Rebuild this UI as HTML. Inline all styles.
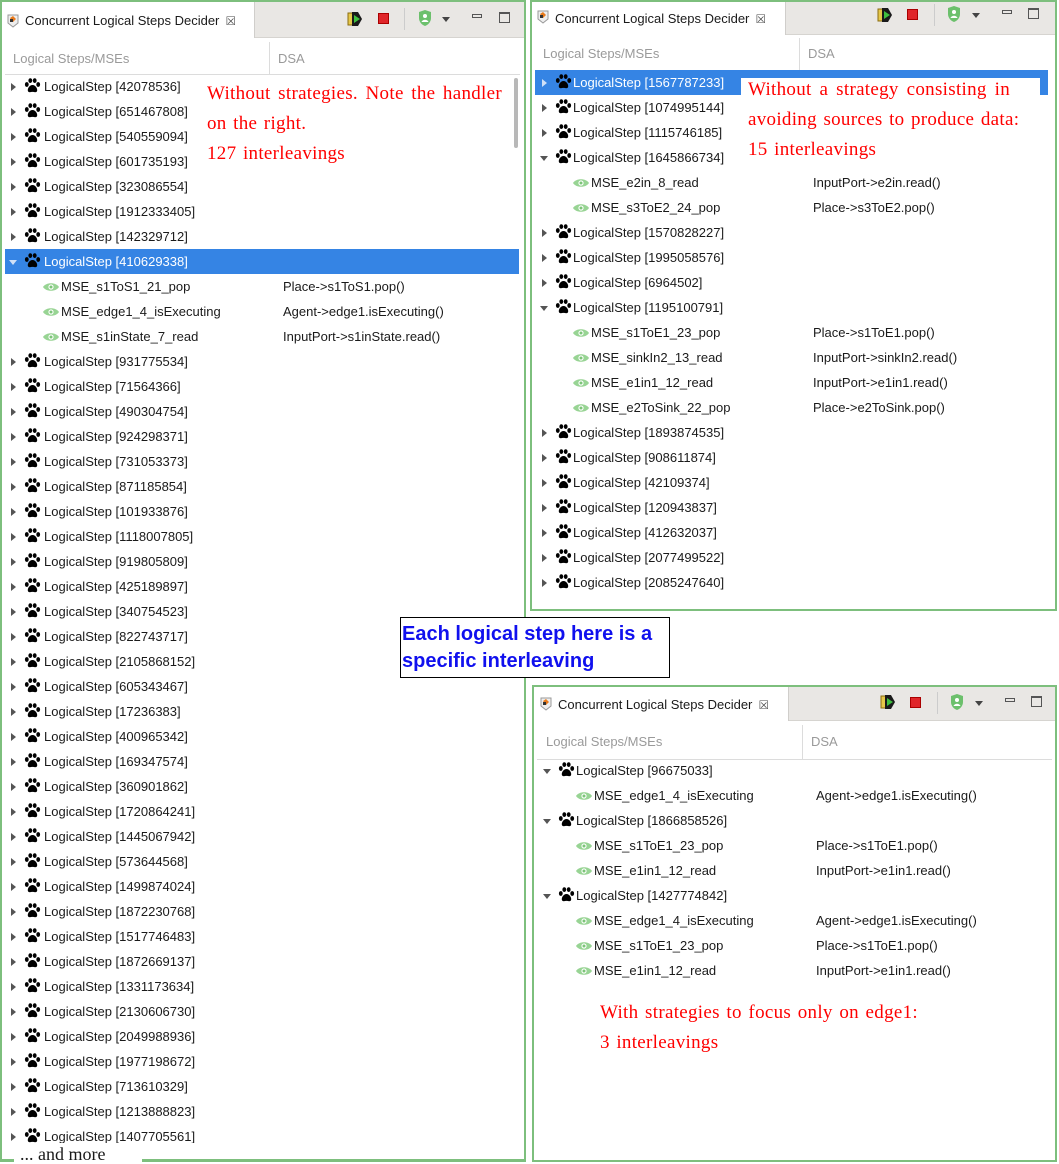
<!DOCTYPE html>
<html><head><meta charset="utf-8"><style>
*{margin:0;padding:0;box-sizing:border-box}
body{width:1059px;height:1162px;background:#fff;position:relative;overflow:hidden;font-family:"Liberation Sans",sans-serif;font-size:13px;color:#1a1a1a}
.panel{position:absolute;border:2px solid #7dbf7d;background:#fff}
.tabbar{position:absolute;left:0;right:0;top:0;background:#e9e7e4;border-bottom:1px solid #d6d4d0}
.tab{position:absolute;left:0;top:0;background:#fff;border-right:1px solid #d0cecb;font-size:13px;white-space:nowrap}
.hdr{position:absolute;color:#9a9a9a;font-size:13px;white-space:nowrap}
.vdiv{position:absolute;width:1px;background:#dcdcdc}
.hline{position:absolute;height:1px;background:#dcdcdc}
.rows{position:absolute;left:0;width:1059px}
.r{height:25px;position:relative;white-space:nowrap;line-height:25px}
.r .a{position:absolute;left:var(--a);top:8.5px;width:0;height:0;border-left:5px solid #555;border-top:4px solid transparent;border-bottom:4px solid transparent}
.r .dn{position:absolute;left:calc(var(--a) - 2px);top:10.5px;width:0;height:0;border-top:5px solid #555;border-left:4.5px solid transparent;border-right:4.5px solid transparent}
.r svg.p{position:absolute;left:var(--p);top:4px}
.r .t{position:absolute;left:var(--t)}
.r svg.e{position:absolute;left:var(--e);top:8px}
.r .c{position:absolute;left:var(--c)}
.r .d{position:absolute;left:var(--d)}
.sel{background:#3584e4;color:#fff}
.sel .dn{border-top-color:#cfe0f7}
.sel .a{border-left-color:#cfe0f7}
.note{position:absolute;color:#f00;font-family:"Liberation Serif",serif;font-size:19px;letter-spacing:.3px;word-spacing:1.5px;line-height:30px;white-space:nowrap}
.note .j{text-align:justify;text-align-last:justify}
</style></head><body>

<!-- LEFT PANEL -->
<div class="panel" style="left:0;top:0;width:526px;height:1162px;border-bottom:none">
 <div class="tabbar" style="height:36px"></div>
 <div class="tab" style="width:253px;height:36px;line-height:38px;padding-left:23px">Concurrent Logical Steps Decider <span style="font-size:12px;color:#444;margin-left:3px">⮽</span></div>
 <svg style="position:absolute;left:5px;top:12px" width="12" height="14" viewBox="0 0 12 14"><path d="M1 1h10v8l-5 4-5-4z" fill="#eee" stroke="#999"/><path d="M3 4l3-2 3 3-3 3z" fill="#e87a1c"/><rect x="3" y="5" width="3" height="3" fill="#333"/></svg>
 <div class="hdr" style="left:11px;top:49px">Logical Steps/MSEs</div>
 <div class="vdiv" style="left:267px;top:40px;height:32px"></div>
 <div class="hdr" style="left:276px;top:49px">DSA</div>
 <div class="hline" style="left:3px;width:515px;top:72px"></div>
 <div style="position:absolute;left:512px;top:76px;width:4px;height:70px;background:#b8b8b8;border-radius:2px"></div>
</div>
<svg style="position:absolute;left:346px;top:10px" width="18" height="18" viewBox="0 0 18 18"><rect x="2" y="3" width="5" height="12" fill="#e6c84a" stroke="#8a6d10"/><path d="M6 2h6l4 7-4 7H6z" fill="#1a1a1a"/><path d="M8 5l6 4-6 4z" fill="#3fbf3f"/></svg>
<div style="position:absolute;left:378px;top:13px;width:11px;height:11px;background:#e0262a;border:1px solid #a00"></div>
<div style="position:absolute;left:404px;top:8px;width:1px;height:22px;background:#ccc"></div>
<svg style="position:absolute;left:417px;top:9px" width="16" height="18" viewBox="0 0 16 18"><path d="M8 1l6 2v6c0 4-3 7-6 8-3-1-6-4-6-8V3z" fill="#6cc06c"/><circle cx="8" cy="7" r="2" fill="#fff"/><path d="M4.5 13c1-3 6-3 7 0z" fill="#fff"/></svg>
<div style="position:absolute;left:442px;top:17px;border-top:5px solid #444;border-left:4.5px solid transparent;border-right:4.5px solid transparent"></div>
<div style="position:absolute;left:472px;top:14px;width:10px;height:4px;border:1px solid #555"></div>
<div style="position:absolute;left:499px;top:12px;width:11px;height:11px;border:1px solid #555;border-top-width:2px"></div>

<div class="rows" style="top:74px;--a:11px;--p:24px;--t:44px;--e:43px;--c:61px;--d:283px">
<div class="r"><i class="a"></i><svg class="p" width="17" height="16" viewBox="0 0 17 16"><ellipse cx="2.8" cy="6.5" rx="1.9" ry="2.4"/><ellipse cx="6.3" cy="2.6" rx="1.9" ry="2.4"/><ellipse cx="10.7" cy="2.6" rx="1.9" ry="2.4"/><ellipse cx="14.2" cy="6.5" rx="1.9" ry="2.4"/><path d="M8.5 7c-3 0-5.5 4-4.5 6.3 1 1.6 3 .6 4.5.6s3.5 1 4.5-.6C14 11 11.5 7 8.5 7z"/></svg><span class="t">LogicalStep [42078536]</span></div>
<div class="r"><i class="a"></i><svg class="p" width="17" height="16" viewBox="0 0 17 16"><ellipse cx="2.8" cy="6.5" rx="1.9" ry="2.4"/><ellipse cx="6.3" cy="2.6" rx="1.9" ry="2.4"/><ellipse cx="10.7" cy="2.6" rx="1.9" ry="2.4"/><ellipse cx="14.2" cy="6.5" rx="1.9" ry="2.4"/><path d="M8.5 7c-3 0-5.5 4-4.5 6.3 1 1.6 3 .6 4.5.6s3.5 1 4.5-.6C14 11 11.5 7 8.5 7z"/></svg><span class="t">LogicalStep [651467808]</span></div>
<div class="r"><i class="a"></i><svg class="p" width="17" height="16" viewBox="0 0 17 16"><ellipse cx="2.8" cy="6.5" rx="1.9" ry="2.4"/><ellipse cx="6.3" cy="2.6" rx="1.9" ry="2.4"/><ellipse cx="10.7" cy="2.6" rx="1.9" ry="2.4"/><ellipse cx="14.2" cy="6.5" rx="1.9" ry="2.4"/><path d="M8.5 7c-3 0-5.5 4-4.5 6.3 1 1.6 3 .6 4.5.6s3.5 1 4.5-.6C14 11 11.5 7 8.5 7z"/></svg><span class="t">LogicalStep [540559094]</span></div>
<div class="r"><i class="a"></i><svg class="p" width="17" height="16" viewBox="0 0 17 16"><ellipse cx="2.8" cy="6.5" rx="1.9" ry="2.4"/><ellipse cx="6.3" cy="2.6" rx="1.9" ry="2.4"/><ellipse cx="10.7" cy="2.6" rx="1.9" ry="2.4"/><ellipse cx="14.2" cy="6.5" rx="1.9" ry="2.4"/><path d="M8.5 7c-3 0-5.5 4-4.5 6.3 1 1.6 3 .6 4.5.6s3.5 1 4.5-.6C14 11 11.5 7 8.5 7z"/></svg><span class="t">LogicalStep [601735193]</span></div>
<div class="r"><i class="a"></i><svg class="p" width="17" height="16" viewBox="0 0 17 16"><ellipse cx="2.8" cy="6.5" rx="1.9" ry="2.4"/><ellipse cx="6.3" cy="2.6" rx="1.9" ry="2.4"/><ellipse cx="10.7" cy="2.6" rx="1.9" ry="2.4"/><ellipse cx="14.2" cy="6.5" rx="1.9" ry="2.4"/><path d="M8.5 7c-3 0-5.5 4-4.5 6.3 1 1.6 3 .6 4.5.6s3.5 1 4.5-.6C14 11 11.5 7 8.5 7z"/></svg><span class="t">LogicalStep [323086554]</span></div>
<div class="r"><i class="a"></i><svg class="p" width="17" height="16" viewBox="0 0 17 16"><ellipse cx="2.8" cy="6.5" rx="1.9" ry="2.4"/><ellipse cx="6.3" cy="2.6" rx="1.9" ry="2.4"/><ellipse cx="10.7" cy="2.6" rx="1.9" ry="2.4"/><ellipse cx="14.2" cy="6.5" rx="1.9" ry="2.4"/><path d="M8.5 7c-3 0-5.5 4-4.5 6.3 1 1.6 3 .6 4.5.6s3.5 1 4.5-.6C14 11 11.5 7 8.5 7z"/></svg><span class="t">LogicalStep [1912333405]</span></div>
<div class="r"><i class="a"></i><svg class="p" width="17" height="16" viewBox="0 0 17 16"><ellipse cx="2.8" cy="6.5" rx="1.9" ry="2.4"/><ellipse cx="6.3" cy="2.6" rx="1.9" ry="2.4"/><ellipse cx="10.7" cy="2.6" rx="1.9" ry="2.4"/><ellipse cx="14.2" cy="6.5" rx="1.9" ry="2.4"/><path d="M8.5 7c-3 0-5.5 4-4.5 6.3 1 1.6 3 .6 4.5.6s3.5 1 4.5-.6C14 11 11.5 7 8.5 7z"/></svg><span class="t">LogicalStep [142329712]</span></div>
<div class="r sel" style="margin-left:5px;width:514px"><i class="dn" style="left:4px"></i><svg class="p" style="left:19px" width="17" height="16" viewBox="0 0 17 16"><ellipse cx="2.8" cy="6.5" rx="1.9" ry="2.4"/><ellipse cx="6.3" cy="2.6" rx="1.9" ry="2.4"/><ellipse cx="10.7" cy="2.6" rx="1.9" ry="2.4"/><ellipse cx="14.2" cy="6.5" rx="1.9" ry="2.4"/><path d="M8.5 7c-3 0-5.5 4-4.5 6.3 1 1.6 3 .6 4.5.6s3.5 1 4.5-.6C14 11 11.5 7 8.5 7z"/></svg><span class="t" style="left:39px">LogicalStep [410629338]</span></div>
<div class="r"><svg class="e" width="16" height="10" viewBox="0 0 16 10"><path d="M0 5C3 0 13 0 16 5 13 10 3 10 0 5z" fill="#98d494"/><circle cx="8" cy="5" r="2.6" fill="#fff"/><circle cx="8" cy="5" r="1.5" fill="#7cc478"/></svg><span class="c">MSE_s1ToS1_21_pop</span><span class="d">Place-&gt;s1ToS1.pop()</span></div>
<div class="r"><svg class="e" width="16" height="10" viewBox="0 0 16 10"><path d="M0 5C3 0 13 0 16 5 13 10 3 10 0 5z" fill="#98d494"/><circle cx="8" cy="5" r="2.6" fill="#fff"/><circle cx="8" cy="5" r="1.5" fill="#7cc478"/></svg><span class="c">MSE_edge1_4_isExecuting</span><span class="d">Agent-&gt;edge1.isExecuting()</span></div>
<div class="r"><svg class="e" width="16" height="10" viewBox="0 0 16 10"><path d="M0 5C3 0 13 0 16 5 13 10 3 10 0 5z" fill="#98d494"/><circle cx="8" cy="5" r="2.6" fill="#fff"/><circle cx="8" cy="5" r="1.5" fill="#7cc478"/></svg><span class="c">MSE_s1inState_7_read</span><span class="d">InputPort-&gt;s1inState.read()</span></div>
<div class="r"><i class="a"></i><svg class="p" width="17" height="16" viewBox="0 0 17 16"><ellipse cx="2.8" cy="6.5" rx="1.9" ry="2.4"/><ellipse cx="6.3" cy="2.6" rx="1.9" ry="2.4"/><ellipse cx="10.7" cy="2.6" rx="1.9" ry="2.4"/><ellipse cx="14.2" cy="6.5" rx="1.9" ry="2.4"/><path d="M8.5 7c-3 0-5.5 4-4.5 6.3 1 1.6 3 .6 4.5.6s3.5 1 4.5-.6C14 11 11.5 7 8.5 7z"/></svg><span class="t">LogicalStep [931775534]</span></div>
<div class="r"><i class="a"></i><svg class="p" width="17" height="16" viewBox="0 0 17 16"><ellipse cx="2.8" cy="6.5" rx="1.9" ry="2.4"/><ellipse cx="6.3" cy="2.6" rx="1.9" ry="2.4"/><ellipse cx="10.7" cy="2.6" rx="1.9" ry="2.4"/><ellipse cx="14.2" cy="6.5" rx="1.9" ry="2.4"/><path d="M8.5 7c-3 0-5.5 4-4.5 6.3 1 1.6 3 .6 4.5.6s3.5 1 4.5-.6C14 11 11.5 7 8.5 7z"/></svg><span class="t">LogicalStep [71564366]</span></div>
<div class="r"><i class="a"></i><svg class="p" width="17" height="16" viewBox="0 0 17 16"><ellipse cx="2.8" cy="6.5" rx="1.9" ry="2.4"/><ellipse cx="6.3" cy="2.6" rx="1.9" ry="2.4"/><ellipse cx="10.7" cy="2.6" rx="1.9" ry="2.4"/><ellipse cx="14.2" cy="6.5" rx="1.9" ry="2.4"/><path d="M8.5 7c-3 0-5.5 4-4.5 6.3 1 1.6 3 .6 4.5.6s3.5 1 4.5-.6C14 11 11.5 7 8.5 7z"/></svg><span class="t">LogicalStep [490304754]</span></div>
<div class="r"><i class="a"></i><svg class="p" width="17" height="16" viewBox="0 0 17 16"><ellipse cx="2.8" cy="6.5" rx="1.9" ry="2.4"/><ellipse cx="6.3" cy="2.6" rx="1.9" ry="2.4"/><ellipse cx="10.7" cy="2.6" rx="1.9" ry="2.4"/><ellipse cx="14.2" cy="6.5" rx="1.9" ry="2.4"/><path d="M8.5 7c-3 0-5.5 4-4.5 6.3 1 1.6 3 .6 4.5.6s3.5 1 4.5-.6C14 11 11.5 7 8.5 7z"/></svg><span class="t">LogicalStep [924298371]</span></div>
<div class="r"><i class="a"></i><svg class="p" width="17" height="16" viewBox="0 0 17 16"><ellipse cx="2.8" cy="6.5" rx="1.9" ry="2.4"/><ellipse cx="6.3" cy="2.6" rx="1.9" ry="2.4"/><ellipse cx="10.7" cy="2.6" rx="1.9" ry="2.4"/><ellipse cx="14.2" cy="6.5" rx="1.9" ry="2.4"/><path d="M8.5 7c-3 0-5.5 4-4.5 6.3 1 1.6 3 .6 4.5.6s3.5 1 4.5-.6C14 11 11.5 7 8.5 7z"/></svg><span class="t">LogicalStep [731053373]</span></div>
<div class="r"><i class="a"></i><svg class="p" width="17" height="16" viewBox="0 0 17 16"><ellipse cx="2.8" cy="6.5" rx="1.9" ry="2.4"/><ellipse cx="6.3" cy="2.6" rx="1.9" ry="2.4"/><ellipse cx="10.7" cy="2.6" rx="1.9" ry="2.4"/><ellipse cx="14.2" cy="6.5" rx="1.9" ry="2.4"/><path d="M8.5 7c-3 0-5.5 4-4.5 6.3 1 1.6 3 .6 4.5.6s3.5 1 4.5-.6C14 11 11.5 7 8.5 7z"/></svg><span class="t">LogicalStep [871185854]</span></div>
<div class="r"><i class="a"></i><svg class="p" width="17" height="16" viewBox="0 0 17 16"><ellipse cx="2.8" cy="6.5" rx="1.9" ry="2.4"/><ellipse cx="6.3" cy="2.6" rx="1.9" ry="2.4"/><ellipse cx="10.7" cy="2.6" rx="1.9" ry="2.4"/><ellipse cx="14.2" cy="6.5" rx="1.9" ry="2.4"/><path d="M8.5 7c-3 0-5.5 4-4.5 6.3 1 1.6 3 .6 4.5.6s3.5 1 4.5-.6C14 11 11.5 7 8.5 7z"/></svg><span class="t">LogicalStep [101933876]</span></div>
<div class="r"><i class="a"></i><svg class="p" width="17" height="16" viewBox="0 0 17 16"><ellipse cx="2.8" cy="6.5" rx="1.9" ry="2.4"/><ellipse cx="6.3" cy="2.6" rx="1.9" ry="2.4"/><ellipse cx="10.7" cy="2.6" rx="1.9" ry="2.4"/><ellipse cx="14.2" cy="6.5" rx="1.9" ry="2.4"/><path d="M8.5 7c-3 0-5.5 4-4.5 6.3 1 1.6 3 .6 4.5.6s3.5 1 4.5-.6C14 11 11.5 7 8.5 7z"/></svg><span class="t">LogicalStep [1118007805]</span></div>
<div class="r"><i class="a"></i><svg class="p" width="17" height="16" viewBox="0 0 17 16"><ellipse cx="2.8" cy="6.5" rx="1.9" ry="2.4"/><ellipse cx="6.3" cy="2.6" rx="1.9" ry="2.4"/><ellipse cx="10.7" cy="2.6" rx="1.9" ry="2.4"/><ellipse cx="14.2" cy="6.5" rx="1.9" ry="2.4"/><path d="M8.5 7c-3 0-5.5 4-4.5 6.3 1 1.6 3 .6 4.5.6s3.5 1 4.5-.6C14 11 11.5 7 8.5 7z"/></svg><span class="t">LogicalStep [919805809]</span></div>
<div class="r"><i class="a"></i><svg class="p" width="17" height="16" viewBox="0 0 17 16"><ellipse cx="2.8" cy="6.5" rx="1.9" ry="2.4"/><ellipse cx="6.3" cy="2.6" rx="1.9" ry="2.4"/><ellipse cx="10.7" cy="2.6" rx="1.9" ry="2.4"/><ellipse cx="14.2" cy="6.5" rx="1.9" ry="2.4"/><path d="M8.5 7c-3 0-5.5 4-4.5 6.3 1 1.6 3 .6 4.5.6s3.5 1 4.5-.6C14 11 11.5 7 8.5 7z"/></svg><span class="t">LogicalStep [425189897]</span></div>
<div class="r"><i class="a"></i><svg class="p" width="17" height="16" viewBox="0 0 17 16"><ellipse cx="2.8" cy="6.5" rx="1.9" ry="2.4"/><ellipse cx="6.3" cy="2.6" rx="1.9" ry="2.4"/><ellipse cx="10.7" cy="2.6" rx="1.9" ry="2.4"/><ellipse cx="14.2" cy="6.5" rx="1.9" ry="2.4"/><path d="M8.5 7c-3 0-5.5 4-4.5 6.3 1 1.6 3 .6 4.5.6s3.5 1 4.5-.6C14 11 11.5 7 8.5 7z"/></svg><span class="t">LogicalStep [340754523]</span></div>
<div class="r"><i class="a"></i><svg class="p" width="17" height="16" viewBox="0 0 17 16"><ellipse cx="2.8" cy="6.5" rx="1.9" ry="2.4"/><ellipse cx="6.3" cy="2.6" rx="1.9" ry="2.4"/><ellipse cx="10.7" cy="2.6" rx="1.9" ry="2.4"/><ellipse cx="14.2" cy="6.5" rx="1.9" ry="2.4"/><path d="M8.5 7c-3 0-5.5 4-4.5 6.3 1 1.6 3 .6 4.5.6s3.5 1 4.5-.6C14 11 11.5 7 8.5 7z"/></svg><span class="t">LogicalStep [822743717]</span></div>
<div class="r"><i class="a"></i><svg class="p" width="17" height="16" viewBox="0 0 17 16"><ellipse cx="2.8" cy="6.5" rx="1.9" ry="2.4"/><ellipse cx="6.3" cy="2.6" rx="1.9" ry="2.4"/><ellipse cx="10.7" cy="2.6" rx="1.9" ry="2.4"/><ellipse cx="14.2" cy="6.5" rx="1.9" ry="2.4"/><path d="M8.5 7c-3 0-5.5 4-4.5 6.3 1 1.6 3 .6 4.5.6s3.5 1 4.5-.6C14 11 11.5 7 8.5 7z"/></svg><span class="t">LogicalStep [2105868152]</span></div>
<div class="r"><i class="a"></i><svg class="p" width="17" height="16" viewBox="0 0 17 16"><ellipse cx="2.8" cy="6.5" rx="1.9" ry="2.4"/><ellipse cx="6.3" cy="2.6" rx="1.9" ry="2.4"/><ellipse cx="10.7" cy="2.6" rx="1.9" ry="2.4"/><ellipse cx="14.2" cy="6.5" rx="1.9" ry="2.4"/><path d="M8.5 7c-3 0-5.5 4-4.5 6.3 1 1.6 3 .6 4.5.6s3.5 1 4.5-.6C14 11 11.5 7 8.5 7z"/></svg><span class="t">LogicalStep [605343467]</span></div>
<div class="r"><i class="a"></i><svg class="p" width="17" height="16" viewBox="0 0 17 16"><ellipse cx="2.8" cy="6.5" rx="1.9" ry="2.4"/><ellipse cx="6.3" cy="2.6" rx="1.9" ry="2.4"/><ellipse cx="10.7" cy="2.6" rx="1.9" ry="2.4"/><ellipse cx="14.2" cy="6.5" rx="1.9" ry="2.4"/><path d="M8.5 7c-3 0-5.5 4-4.5 6.3 1 1.6 3 .6 4.5.6s3.5 1 4.5-.6C14 11 11.5 7 8.5 7z"/></svg><span class="t">LogicalStep [17236383]</span></div>
<div class="r"><i class="a"></i><svg class="p" width="17" height="16" viewBox="0 0 17 16"><ellipse cx="2.8" cy="6.5" rx="1.9" ry="2.4"/><ellipse cx="6.3" cy="2.6" rx="1.9" ry="2.4"/><ellipse cx="10.7" cy="2.6" rx="1.9" ry="2.4"/><ellipse cx="14.2" cy="6.5" rx="1.9" ry="2.4"/><path d="M8.5 7c-3 0-5.5 4-4.5 6.3 1 1.6 3 .6 4.5.6s3.5 1 4.5-.6C14 11 11.5 7 8.5 7z"/></svg><span class="t">LogicalStep [400965342]</span></div>
<div class="r"><i class="a"></i><svg class="p" width="17" height="16" viewBox="0 0 17 16"><ellipse cx="2.8" cy="6.5" rx="1.9" ry="2.4"/><ellipse cx="6.3" cy="2.6" rx="1.9" ry="2.4"/><ellipse cx="10.7" cy="2.6" rx="1.9" ry="2.4"/><ellipse cx="14.2" cy="6.5" rx="1.9" ry="2.4"/><path d="M8.5 7c-3 0-5.5 4-4.5 6.3 1 1.6 3 .6 4.5.6s3.5 1 4.5-.6C14 11 11.5 7 8.5 7z"/></svg><span class="t">LogicalStep [169347574]</span></div>
<div class="r"><i class="a"></i><svg class="p" width="17" height="16" viewBox="0 0 17 16"><ellipse cx="2.8" cy="6.5" rx="1.9" ry="2.4"/><ellipse cx="6.3" cy="2.6" rx="1.9" ry="2.4"/><ellipse cx="10.7" cy="2.6" rx="1.9" ry="2.4"/><ellipse cx="14.2" cy="6.5" rx="1.9" ry="2.4"/><path d="M8.5 7c-3 0-5.5 4-4.5 6.3 1 1.6 3 .6 4.5.6s3.5 1 4.5-.6C14 11 11.5 7 8.5 7z"/></svg><span class="t">LogicalStep [360901862]</span></div>
<div class="r"><i class="a"></i><svg class="p" width="17" height="16" viewBox="0 0 17 16"><ellipse cx="2.8" cy="6.5" rx="1.9" ry="2.4"/><ellipse cx="6.3" cy="2.6" rx="1.9" ry="2.4"/><ellipse cx="10.7" cy="2.6" rx="1.9" ry="2.4"/><ellipse cx="14.2" cy="6.5" rx="1.9" ry="2.4"/><path d="M8.5 7c-3 0-5.5 4-4.5 6.3 1 1.6 3 .6 4.5.6s3.5 1 4.5-.6C14 11 11.5 7 8.5 7z"/></svg><span class="t">LogicalStep [1720864241]</span></div>
<div class="r"><i class="a"></i><svg class="p" width="17" height="16" viewBox="0 0 17 16"><ellipse cx="2.8" cy="6.5" rx="1.9" ry="2.4"/><ellipse cx="6.3" cy="2.6" rx="1.9" ry="2.4"/><ellipse cx="10.7" cy="2.6" rx="1.9" ry="2.4"/><ellipse cx="14.2" cy="6.5" rx="1.9" ry="2.4"/><path d="M8.5 7c-3 0-5.5 4-4.5 6.3 1 1.6 3 .6 4.5.6s3.5 1 4.5-.6C14 11 11.5 7 8.5 7z"/></svg><span class="t">LogicalStep [1445067942]</span></div>
<div class="r"><i class="a"></i><svg class="p" width="17" height="16" viewBox="0 0 17 16"><ellipse cx="2.8" cy="6.5" rx="1.9" ry="2.4"/><ellipse cx="6.3" cy="2.6" rx="1.9" ry="2.4"/><ellipse cx="10.7" cy="2.6" rx="1.9" ry="2.4"/><ellipse cx="14.2" cy="6.5" rx="1.9" ry="2.4"/><path d="M8.5 7c-3 0-5.5 4-4.5 6.3 1 1.6 3 .6 4.5.6s3.5 1 4.5-.6C14 11 11.5 7 8.5 7z"/></svg><span class="t">LogicalStep [573644568]</span></div>
<div class="r"><i class="a"></i><svg class="p" width="17" height="16" viewBox="0 0 17 16"><ellipse cx="2.8" cy="6.5" rx="1.9" ry="2.4"/><ellipse cx="6.3" cy="2.6" rx="1.9" ry="2.4"/><ellipse cx="10.7" cy="2.6" rx="1.9" ry="2.4"/><ellipse cx="14.2" cy="6.5" rx="1.9" ry="2.4"/><path d="M8.5 7c-3 0-5.5 4-4.5 6.3 1 1.6 3 .6 4.5.6s3.5 1 4.5-.6C14 11 11.5 7 8.5 7z"/></svg><span class="t">LogicalStep [1499874024]</span></div>
<div class="r"><i class="a"></i><svg class="p" width="17" height="16" viewBox="0 0 17 16"><ellipse cx="2.8" cy="6.5" rx="1.9" ry="2.4"/><ellipse cx="6.3" cy="2.6" rx="1.9" ry="2.4"/><ellipse cx="10.7" cy="2.6" rx="1.9" ry="2.4"/><ellipse cx="14.2" cy="6.5" rx="1.9" ry="2.4"/><path d="M8.5 7c-3 0-5.5 4-4.5 6.3 1 1.6 3 .6 4.5.6s3.5 1 4.5-.6C14 11 11.5 7 8.5 7z"/></svg><span class="t">LogicalStep [1872230768]</span></div>
<div class="r"><i class="a"></i><svg class="p" width="17" height="16" viewBox="0 0 17 16"><ellipse cx="2.8" cy="6.5" rx="1.9" ry="2.4"/><ellipse cx="6.3" cy="2.6" rx="1.9" ry="2.4"/><ellipse cx="10.7" cy="2.6" rx="1.9" ry="2.4"/><ellipse cx="14.2" cy="6.5" rx="1.9" ry="2.4"/><path d="M8.5 7c-3 0-5.5 4-4.5 6.3 1 1.6 3 .6 4.5.6s3.5 1 4.5-.6C14 11 11.5 7 8.5 7z"/></svg><span class="t">LogicalStep [1517746483]</span></div>
<div class="r"><i class="a"></i><svg class="p" width="17" height="16" viewBox="0 0 17 16"><ellipse cx="2.8" cy="6.5" rx="1.9" ry="2.4"/><ellipse cx="6.3" cy="2.6" rx="1.9" ry="2.4"/><ellipse cx="10.7" cy="2.6" rx="1.9" ry="2.4"/><ellipse cx="14.2" cy="6.5" rx="1.9" ry="2.4"/><path d="M8.5 7c-3 0-5.5 4-4.5 6.3 1 1.6 3 .6 4.5.6s3.5 1 4.5-.6C14 11 11.5 7 8.5 7z"/></svg><span class="t">LogicalStep [1872669137]</span></div>
<div class="r"><i class="a"></i><svg class="p" width="17" height="16" viewBox="0 0 17 16"><ellipse cx="2.8" cy="6.5" rx="1.9" ry="2.4"/><ellipse cx="6.3" cy="2.6" rx="1.9" ry="2.4"/><ellipse cx="10.7" cy="2.6" rx="1.9" ry="2.4"/><ellipse cx="14.2" cy="6.5" rx="1.9" ry="2.4"/><path d="M8.5 7c-3 0-5.5 4-4.5 6.3 1 1.6 3 .6 4.5.6s3.5 1 4.5-.6C14 11 11.5 7 8.5 7z"/></svg><span class="t">LogicalStep [1331173634]</span></div>
<div class="r"><i class="a"></i><svg class="p" width="17" height="16" viewBox="0 0 17 16"><ellipse cx="2.8" cy="6.5" rx="1.9" ry="2.4"/><ellipse cx="6.3" cy="2.6" rx="1.9" ry="2.4"/><ellipse cx="10.7" cy="2.6" rx="1.9" ry="2.4"/><ellipse cx="14.2" cy="6.5" rx="1.9" ry="2.4"/><path d="M8.5 7c-3 0-5.5 4-4.5 6.3 1 1.6 3 .6 4.5.6s3.5 1 4.5-.6C14 11 11.5 7 8.5 7z"/></svg><span class="t">LogicalStep [2130606730]</span></div>
<div class="r"><i class="a"></i><svg class="p" width="17" height="16" viewBox="0 0 17 16"><ellipse cx="2.8" cy="6.5" rx="1.9" ry="2.4"/><ellipse cx="6.3" cy="2.6" rx="1.9" ry="2.4"/><ellipse cx="10.7" cy="2.6" rx="1.9" ry="2.4"/><ellipse cx="14.2" cy="6.5" rx="1.9" ry="2.4"/><path d="M8.5 7c-3 0-5.5 4-4.5 6.3 1 1.6 3 .6 4.5.6s3.5 1 4.5-.6C14 11 11.5 7 8.5 7z"/></svg><span class="t">LogicalStep [2049988936]</span></div>
<div class="r"><i class="a"></i><svg class="p" width="17" height="16" viewBox="0 0 17 16"><ellipse cx="2.8" cy="6.5" rx="1.9" ry="2.4"/><ellipse cx="6.3" cy="2.6" rx="1.9" ry="2.4"/><ellipse cx="10.7" cy="2.6" rx="1.9" ry="2.4"/><ellipse cx="14.2" cy="6.5" rx="1.9" ry="2.4"/><path d="M8.5 7c-3 0-5.5 4-4.5 6.3 1 1.6 3 .6 4.5.6s3.5 1 4.5-.6C14 11 11.5 7 8.5 7z"/></svg><span class="t">LogicalStep [1977198672]</span></div>
<div class="r"><i class="a"></i><svg class="p" width="17" height="16" viewBox="0 0 17 16"><ellipse cx="2.8" cy="6.5" rx="1.9" ry="2.4"/><ellipse cx="6.3" cy="2.6" rx="1.9" ry="2.4"/><ellipse cx="10.7" cy="2.6" rx="1.9" ry="2.4"/><ellipse cx="14.2" cy="6.5" rx="1.9" ry="2.4"/><path d="M8.5 7c-3 0-5.5 4-4.5 6.3 1 1.6 3 .6 4.5.6s3.5 1 4.5-.6C14 11 11.5 7 8.5 7z"/></svg><span class="t">LogicalStep [713610329]</span></div>
<div class="r"><i class="a"></i><svg class="p" width="17" height="16" viewBox="0 0 17 16"><ellipse cx="2.8" cy="6.5" rx="1.9" ry="2.4"/><ellipse cx="6.3" cy="2.6" rx="1.9" ry="2.4"/><ellipse cx="10.7" cy="2.6" rx="1.9" ry="2.4"/><ellipse cx="14.2" cy="6.5" rx="1.9" ry="2.4"/><path d="M8.5 7c-3 0-5.5 4-4.5 6.3 1 1.6 3 .6 4.5.6s3.5 1 4.5-.6C14 11 11.5 7 8.5 7z"/></svg><span class="t">LogicalStep [1213888823]</span></div>
<div class="r"><i class="a"></i><svg class="p" width="17" height="16" viewBox="0 0 17 16"><ellipse cx="2.8" cy="6.5" rx="1.9" ry="2.4"/><ellipse cx="6.3" cy="2.6" rx="1.9" ry="2.4"/><ellipse cx="10.7" cy="2.6" rx="1.9" ry="2.4"/><ellipse cx="14.2" cy="6.5" rx="1.9" ry="2.4"/><path d="M8.5 7c-3 0-5.5 4-4.5 6.3 1 1.6 3 .6 4.5.6s3.5 1 4.5-.6C14 11 11.5 7 8.5 7z"/></svg><span class="t">LogicalStep [1407705561]</span></div>
</div>
<div style="position:absolute;left:0;top:1143px;width:526px;height:19px;background:#fff;border-left:2px solid #7dbf7d;border-right:2px solid #7dbf7d"></div>
<div style="position:absolute;left:0;top:1159px;width:526px;height:3px;background:#7dbf7d"></div>
<div style="position:absolute;left:14px;top:1144px;width:128px;height:18px;background:#fff;font-family:'Liberation Serif',serif;font-size:18px;line-height:20px;padding-left:6px">... and more</div>
<div class="note" style="left:207px;top:79px;width:295px"><div class="j">Without strategies. Note the handler</div><div>on the right.</div><div>127 interleavings</div></div>

<!-- RIGHT TOP PANEL -->
<div class="panel" style="left:530px;top:0;width:527px;height:611px">
 <div class="tabbar" style="height:33px"></div>
 <div class="tab" style="width:254px;height:33px;line-height:33px;padding-left:23px">Concurrent Logical Steps Decider <span style="font-size:12px;color:#444;margin-left:3px">⮽</span></div>
 <svg style="position:absolute;left:5px;top:8px" width="12" height="14" viewBox="0 0 12 14"><path d="M1 1h10v8l-5 4-5-4z" fill="#eee" stroke="#999"/><path d="M3 4l3-2 3 3-3 3z" fill="#e87a1c"/><rect x="3" y="5" width="3" height="3" fill="#333"/></svg>
 <div class="hdr" style="left:11px;top:44px">Logical Steps/MSEs</div>
 <div class="vdiv" style="left:267px;top:36px;height:32px"></div>
 <div class="hdr" style="left:276px;top:44px">DSA</div>
 <div class="hline" style="left:3px;width:513px;top:68px"></div>
</div>
<svg style="position:absolute;left:876px;top:6px" width="18" height="18" viewBox="0 0 18 18"><rect x="2" y="3" width="5" height="12" fill="#e6c84a" stroke="#8a6d10"/><path d="M6 2h6l4 7-4 7H6z" fill="#1a1a1a"/><path d="M8 5l6 4-6 4z" fill="#3fbf3f"/></svg>
<div style="position:absolute;left:907px;top:9px;width:11px;height:11px;background:#e0262a;border:1px solid #a00"></div>
<div style="position:absolute;left:934px;top:4px;width:1px;height:22px;background:#ccc"></div>
<svg style="position:absolute;left:946px;top:5px" width="16" height="18" viewBox="0 0 16 18"><path d="M8 1l6 2v6c0 4-3 7-6 8-3-1-6-4-6-8V3z" fill="#6cc06c"/><circle cx="8" cy="7" r="2" fill="#fff"/><path d="M4.5 13c1-3 6-3 7 0z" fill="#fff"/></svg>
<div style="position:absolute;left:972px;top:13px;border-top:5px solid #444;border-left:4.5px solid transparent;border-right:4.5px solid transparent"></div>
<div style="position:absolute;left:1002px;top:10px;width:10px;height:4px;border:1px solid #555"></div>
<div style="position:absolute;left:1028px;top:8px;width:11px;height:11px;border:1px solid #555;border-top-width:2px"></div>

<div class="rows" style="top:70px;--a:542px;--p:555px;--t:573px;--e:573px;--c:591px;--d:813px">
<div class="r sel" style="margin-left:535px;width:513px"><i class="a" style="left:7px"></i><svg class="p" style="left:20px" width="17" height="16" viewBox="0 0 17 16"><ellipse cx="2.8" cy="6.5" rx="1.9" ry="2.4"/><ellipse cx="6.3" cy="2.6" rx="1.9" ry="2.4"/><ellipse cx="10.7" cy="2.6" rx="1.9" ry="2.4"/><ellipse cx="14.2" cy="6.5" rx="1.9" ry="2.4"/><path d="M8.5 7c-3 0-5.5 4-4.5 6.3 1 1.6 3 .6 4.5.6s3.5 1 4.5-.6C14 11 11.5 7 8.5 7z"/></svg><span class="t" style="left:38px">LogicalStep [1567787233]</span></div>
<div class="r"><i class="a"></i><svg class="p" width="17" height="16" viewBox="0 0 17 16"><ellipse cx="2.8" cy="6.5" rx="1.9" ry="2.4"/><ellipse cx="6.3" cy="2.6" rx="1.9" ry="2.4"/><ellipse cx="10.7" cy="2.6" rx="1.9" ry="2.4"/><ellipse cx="14.2" cy="6.5" rx="1.9" ry="2.4"/><path d="M8.5 7c-3 0-5.5 4-4.5 6.3 1 1.6 3 .6 4.5.6s3.5 1 4.5-.6C14 11 11.5 7 8.5 7z"/></svg><span class="t">LogicalStep [1074995144]</span></div>
<div class="r"><i class="a"></i><svg class="p" width="17" height="16" viewBox="0 0 17 16"><ellipse cx="2.8" cy="6.5" rx="1.9" ry="2.4"/><ellipse cx="6.3" cy="2.6" rx="1.9" ry="2.4"/><ellipse cx="10.7" cy="2.6" rx="1.9" ry="2.4"/><ellipse cx="14.2" cy="6.5" rx="1.9" ry="2.4"/><path d="M8.5 7c-3 0-5.5 4-4.5 6.3 1 1.6 3 .6 4.5.6s3.5 1 4.5-.6C14 11 11.5 7 8.5 7z"/></svg><span class="t">LogicalStep [1115746185]</span></div>
<div class="r"><i class="dn"></i><svg class="p" width="17" height="16" viewBox="0 0 17 16"><ellipse cx="2.8" cy="6.5" rx="1.9" ry="2.4"/><ellipse cx="6.3" cy="2.6" rx="1.9" ry="2.4"/><ellipse cx="10.7" cy="2.6" rx="1.9" ry="2.4"/><ellipse cx="14.2" cy="6.5" rx="1.9" ry="2.4"/><path d="M8.5 7c-3 0-5.5 4-4.5 6.3 1 1.6 3 .6 4.5.6s3.5 1 4.5-.6C14 11 11.5 7 8.5 7z"/></svg><span class="t">LogicalStep [1645866734]</span></div>
<div class="r"><svg class="e" width="16" height="10" viewBox="0 0 16 10"><path d="M0 5C3 0 13 0 16 5 13 10 3 10 0 5z" fill="#98d494"/><circle cx="8" cy="5" r="2.6" fill="#fff"/><circle cx="8" cy="5" r="1.5" fill="#7cc478"/></svg><span class="c">MSE_e2in_8_read</span><span class="d">InputPort-&gt;e2in.read()</span></div>
<div class="r"><svg class="e" width="16" height="10" viewBox="0 0 16 10"><path d="M0 5C3 0 13 0 16 5 13 10 3 10 0 5z" fill="#98d494"/><circle cx="8" cy="5" r="2.6" fill="#fff"/><circle cx="8" cy="5" r="1.5" fill="#7cc478"/></svg><span class="c">MSE_s3ToE2_24_pop</span><span class="d">Place-&gt;s3ToE2.pop()</span></div>
<div class="r"><i class="a"></i><svg class="p" width="17" height="16" viewBox="0 0 17 16"><ellipse cx="2.8" cy="6.5" rx="1.9" ry="2.4"/><ellipse cx="6.3" cy="2.6" rx="1.9" ry="2.4"/><ellipse cx="10.7" cy="2.6" rx="1.9" ry="2.4"/><ellipse cx="14.2" cy="6.5" rx="1.9" ry="2.4"/><path d="M8.5 7c-3 0-5.5 4-4.5 6.3 1 1.6 3 .6 4.5.6s3.5 1 4.5-.6C14 11 11.5 7 8.5 7z"/></svg><span class="t">LogicalStep [1570828227]</span></div>
<div class="r"><i class="a"></i><svg class="p" width="17" height="16" viewBox="0 0 17 16"><ellipse cx="2.8" cy="6.5" rx="1.9" ry="2.4"/><ellipse cx="6.3" cy="2.6" rx="1.9" ry="2.4"/><ellipse cx="10.7" cy="2.6" rx="1.9" ry="2.4"/><ellipse cx="14.2" cy="6.5" rx="1.9" ry="2.4"/><path d="M8.5 7c-3 0-5.5 4-4.5 6.3 1 1.6 3 .6 4.5.6s3.5 1 4.5-.6C14 11 11.5 7 8.5 7z"/></svg><span class="t">LogicalStep [1995058576]</span></div>
<div class="r"><i class="a"></i><svg class="p" width="17" height="16" viewBox="0 0 17 16"><ellipse cx="2.8" cy="6.5" rx="1.9" ry="2.4"/><ellipse cx="6.3" cy="2.6" rx="1.9" ry="2.4"/><ellipse cx="10.7" cy="2.6" rx="1.9" ry="2.4"/><ellipse cx="14.2" cy="6.5" rx="1.9" ry="2.4"/><path d="M8.5 7c-3 0-5.5 4-4.5 6.3 1 1.6 3 .6 4.5.6s3.5 1 4.5-.6C14 11 11.5 7 8.5 7z"/></svg><span class="t">LogicalStep [6964502]</span></div>
<div class="r"><i class="dn"></i><svg class="p" width="17" height="16" viewBox="0 0 17 16"><ellipse cx="2.8" cy="6.5" rx="1.9" ry="2.4"/><ellipse cx="6.3" cy="2.6" rx="1.9" ry="2.4"/><ellipse cx="10.7" cy="2.6" rx="1.9" ry="2.4"/><ellipse cx="14.2" cy="6.5" rx="1.9" ry="2.4"/><path d="M8.5 7c-3 0-5.5 4-4.5 6.3 1 1.6 3 .6 4.5.6s3.5 1 4.5-.6C14 11 11.5 7 8.5 7z"/></svg><span class="t">LogicalStep [1195100791]</span></div>
<div class="r"><svg class="e" width="16" height="10" viewBox="0 0 16 10"><path d="M0 5C3 0 13 0 16 5 13 10 3 10 0 5z" fill="#98d494"/><circle cx="8" cy="5" r="2.6" fill="#fff"/><circle cx="8" cy="5" r="1.5" fill="#7cc478"/></svg><span class="c">MSE_s1ToE1_23_pop</span><span class="d">Place-&gt;s1ToE1.pop()</span></div>
<div class="r"><svg class="e" width="16" height="10" viewBox="0 0 16 10"><path d="M0 5C3 0 13 0 16 5 13 10 3 10 0 5z" fill="#98d494"/><circle cx="8" cy="5" r="2.6" fill="#fff"/><circle cx="8" cy="5" r="1.5" fill="#7cc478"/></svg><span class="c">MSE_sinkIn2_13_read</span><span class="d">InputPort-&gt;sinkIn2.read()</span></div>
<div class="r"><svg class="e" width="16" height="10" viewBox="0 0 16 10"><path d="M0 5C3 0 13 0 16 5 13 10 3 10 0 5z" fill="#98d494"/><circle cx="8" cy="5" r="2.6" fill="#fff"/><circle cx="8" cy="5" r="1.5" fill="#7cc478"/></svg><span class="c">MSE_e1in1_12_read</span><span class="d">InputPort-&gt;e1in1.read()</span></div>
<div class="r"><svg class="e" width="16" height="10" viewBox="0 0 16 10"><path d="M0 5C3 0 13 0 16 5 13 10 3 10 0 5z" fill="#98d494"/><circle cx="8" cy="5" r="2.6" fill="#fff"/><circle cx="8" cy="5" r="1.5" fill="#7cc478"/></svg><span class="c">MSE_e2ToSink_22_pop</span><span class="d">Place-&gt;e2ToSink.pop()</span></div>
<div class="r"><i class="a"></i><svg class="p" width="17" height="16" viewBox="0 0 17 16"><ellipse cx="2.8" cy="6.5" rx="1.9" ry="2.4"/><ellipse cx="6.3" cy="2.6" rx="1.9" ry="2.4"/><ellipse cx="10.7" cy="2.6" rx="1.9" ry="2.4"/><ellipse cx="14.2" cy="6.5" rx="1.9" ry="2.4"/><path d="M8.5 7c-3 0-5.5 4-4.5 6.3 1 1.6 3 .6 4.5.6s3.5 1 4.5-.6C14 11 11.5 7 8.5 7z"/></svg><span class="t">LogicalStep [1893874535]</span></div>
<div class="r"><i class="a"></i><svg class="p" width="17" height="16" viewBox="0 0 17 16"><ellipse cx="2.8" cy="6.5" rx="1.9" ry="2.4"/><ellipse cx="6.3" cy="2.6" rx="1.9" ry="2.4"/><ellipse cx="10.7" cy="2.6" rx="1.9" ry="2.4"/><ellipse cx="14.2" cy="6.5" rx="1.9" ry="2.4"/><path d="M8.5 7c-3 0-5.5 4-4.5 6.3 1 1.6 3 .6 4.5.6s3.5 1 4.5-.6C14 11 11.5 7 8.5 7z"/></svg><span class="t">LogicalStep [908611874]</span></div>
<div class="r"><i class="a"></i><svg class="p" width="17" height="16" viewBox="0 0 17 16"><ellipse cx="2.8" cy="6.5" rx="1.9" ry="2.4"/><ellipse cx="6.3" cy="2.6" rx="1.9" ry="2.4"/><ellipse cx="10.7" cy="2.6" rx="1.9" ry="2.4"/><ellipse cx="14.2" cy="6.5" rx="1.9" ry="2.4"/><path d="M8.5 7c-3 0-5.5 4-4.5 6.3 1 1.6 3 .6 4.5.6s3.5 1 4.5-.6C14 11 11.5 7 8.5 7z"/></svg><span class="t">LogicalStep [42109374]</span></div>
<div class="r"><i class="a"></i><svg class="p" width="17" height="16" viewBox="0 0 17 16"><ellipse cx="2.8" cy="6.5" rx="1.9" ry="2.4"/><ellipse cx="6.3" cy="2.6" rx="1.9" ry="2.4"/><ellipse cx="10.7" cy="2.6" rx="1.9" ry="2.4"/><ellipse cx="14.2" cy="6.5" rx="1.9" ry="2.4"/><path d="M8.5 7c-3 0-5.5 4-4.5 6.3 1 1.6 3 .6 4.5.6s3.5 1 4.5-.6C14 11 11.5 7 8.5 7z"/></svg><span class="t">LogicalStep [120943837]</span></div>
<div class="r"><i class="a"></i><svg class="p" width="17" height="16" viewBox="0 0 17 16"><ellipse cx="2.8" cy="6.5" rx="1.9" ry="2.4"/><ellipse cx="6.3" cy="2.6" rx="1.9" ry="2.4"/><ellipse cx="10.7" cy="2.6" rx="1.9" ry="2.4"/><ellipse cx="14.2" cy="6.5" rx="1.9" ry="2.4"/><path d="M8.5 7c-3 0-5.5 4-4.5 6.3 1 1.6 3 .6 4.5.6s3.5 1 4.5-.6C14 11 11.5 7 8.5 7z"/></svg><span class="t">LogicalStep [412632037]</span></div>
<div class="r"><i class="a"></i><svg class="p" width="17" height="16" viewBox="0 0 17 16"><ellipse cx="2.8" cy="6.5" rx="1.9" ry="2.4"/><ellipse cx="6.3" cy="2.6" rx="1.9" ry="2.4"/><ellipse cx="10.7" cy="2.6" rx="1.9" ry="2.4"/><ellipse cx="14.2" cy="6.5" rx="1.9" ry="2.4"/><path d="M8.5 7c-3 0-5.5 4-4.5 6.3 1 1.6 3 .6 4.5.6s3.5 1 4.5-.6C14 11 11.5 7 8.5 7z"/></svg><span class="t">LogicalStep [2077499522]</span></div>
<div class="r"><i class="a"></i><svg class="p" width="17" height="16" viewBox="0 0 17 16"><ellipse cx="2.8" cy="6.5" rx="1.9" ry="2.4"/><ellipse cx="6.3" cy="2.6" rx="1.9" ry="2.4"/><ellipse cx="10.7" cy="2.6" rx="1.9" ry="2.4"/><ellipse cx="14.2" cy="6.5" rx="1.9" ry="2.4"/><path d="M8.5 7c-3 0-5.5 4-4.5 6.3 1 1.6 3 .6 4.5.6s3.5 1 4.5-.6C14 11 11.5 7 8.5 7z"/></svg><span class="t">LogicalStep [2085247640]</span></div>
</div>
<div style="position:absolute;left:741px;top:78px;width:299px;height:17px;background:#fff"></div>
<div class="note" style="left:748px;top:75px;width:270px"><div class="j" style="width:262px">Without a strategy consisting in</div><div class="j">avoiding sources to produce data:</div><div>15 interleavings</div></div>

<!-- ANNOTATION BOX -->
<div style="position:absolute;left:400px;top:617px;width:270px;height:61px;border:1px solid #000;background:#fff;color:#1010ee;font-weight:bold;font-size:20px;line-height:27px;padding:3px 0 0 1px;font-family:'Liberation Sans',sans-serif;white-space:nowrap">Each logical step here is a<br>specific interleaving</div>

<!-- BOTTOM RIGHT PANEL -->
<div class="panel" style="left:532px;top:685px;width:525px;height:477px">
 <div class="tabbar" style="height:34px"></div>
 <div class="tab" style="width:255px;height:34px;line-height:36px;padding-left:24px">Concurrent Logical Steps Decider <span style="font-size:12px;color:#444;margin-left:3px">⮽</span></div>
 <svg style="position:absolute;left:6px;top:10px" width="12" height="14" viewBox="0 0 12 14"><path d="M1 1h10v8l-5 4-5-4z" fill="#eee" stroke="#999"/><path d="M3 4l3-2 3 3-3 3z" fill="#e87a1c"/><rect x="3" y="5" width="3" height="3" fill="#333"/></svg>
 <div class="hdr" style="left:12px;top:47px">Logical Steps/MSEs</div>
 <div class="vdiv" style="left:268px;top:38px;height:34px"></div>
 <div class="hdr" style="left:277px;top:47px">DSA</div>
 <div class="hline" style="left:3px;width:515px;top:72px"></div>
</div>
<svg style="position:absolute;left:879px;top:693px" width="18" height="18" viewBox="0 0 18 18"><rect x="2" y="3" width="5" height="12" fill="#e6c84a" stroke="#8a6d10"/><path d="M6 2h6l4 7-4 7H6z" fill="#1a1a1a"/><path d="M8 5l6 4-6 4z" fill="#3fbf3f"/></svg>
<div style="position:absolute;left:910px;top:697px;width:11px;height:11px;background:#e0262a;border:1px solid #a00"></div>
<div style="position:absolute;left:937px;top:692px;width:1px;height:22px;background:#ccc"></div>
<svg style="position:absolute;left:949px;top:693px" width="16" height="18" viewBox="0 0 16 18"><path d="M8 1l6 2v6c0 4-3 7-6 8-3-1-6-4-6-8V3z" fill="#6cc06c"/><circle cx="8" cy="7" r="2" fill="#fff"/><path d="M4.5 13c1-3 6-3 7 0z" fill="#fff"/></svg>
<div style="position:absolute;left:975px;top:701px;border-top:5px solid #444;border-left:4.5px solid transparent;border-right:4.5px solid transparent"></div>
<div style="position:absolute;left:1005px;top:698px;width:10px;height:4px;border:1px solid #555"></div>
<div style="position:absolute;left:1031px;top:696px;width:11px;height:11px;border:1px solid #555;border-top-width:2px"></div>

<div class="rows" style="top:758px;--a:545px;--p:558px;--t:576px;--e:576px;--c:594px;--d:816px">
<div class="r"><i class="dn"></i><svg class="p" width="17" height="16" viewBox="0 0 17 16"><ellipse cx="2.8" cy="6.5" rx="1.9" ry="2.4"/><ellipse cx="6.3" cy="2.6" rx="1.9" ry="2.4"/><ellipse cx="10.7" cy="2.6" rx="1.9" ry="2.4"/><ellipse cx="14.2" cy="6.5" rx="1.9" ry="2.4"/><path d="M8.5 7c-3 0-5.5 4-4.5 6.3 1 1.6 3 .6 4.5.6s3.5 1 4.5-.6C14 11 11.5 7 8.5 7z"/></svg><span class="t">LogicalStep [96675033]</span></div>
<div class="r"><svg class="e" width="16" height="10" viewBox="0 0 16 10"><path d="M0 5C3 0 13 0 16 5 13 10 3 10 0 5z" fill="#98d494"/><circle cx="8" cy="5" r="2.6" fill="#fff"/><circle cx="8" cy="5" r="1.5" fill="#7cc478"/></svg><span class="c">MSE_edge1_4_isExecuting</span><span class="d">Agent-&gt;edge1.isExecuting()</span></div>
<div class="r"><i class="dn"></i><svg class="p" width="17" height="16" viewBox="0 0 17 16"><ellipse cx="2.8" cy="6.5" rx="1.9" ry="2.4"/><ellipse cx="6.3" cy="2.6" rx="1.9" ry="2.4"/><ellipse cx="10.7" cy="2.6" rx="1.9" ry="2.4"/><ellipse cx="14.2" cy="6.5" rx="1.9" ry="2.4"/><path d="M8.5 7c-3 0-5.5 4-4.5 6.3 1 1.6 3 .6 4.5.6s3.5 1 4.5-.6C14 11 11.5 7 8.5 7z"/></svg><span class="t">LogicalStep [1866858526]</span></div>
<div class="r"><svg class="e" width="16" height="10" viewBox="0 0 16 10"><path d="M0 5C3 0 13 0 16 5 13 10 3 10 0 5z" fill="#98d494"/><circle cx="8" cy="5" r="2.6" fill="#fff"/><circle cx="8" cy="5" r="1.5" fill="#7cc478"/></svg><span class="c">MSE_s1ToE1_23_pop</span><span class="d">Place-&gt;s1ToE1.pop()</span></div>
<div class="r"><svg class="e" width="16" height="10" viewBox="0 0 16 10"><path d="M0 5C3 0 13 0 16 5 13 10 3 10 0 5z" fill="#98d494"/><circle cx="8" cy="5" r="2.6" fill="#fff"/><circle cx="8" cy="5" r="1.5" fill="#7cc478"/></svg><span class="c">MSE_e1in1_12_read</span><span class="d">InputPort-&gt;e1in1.read()</span></div>
<div class="r"><i class="dn"></i><svg class="p" width="17" height="16" viewBox="0 0 17 16"><ellipse cx="2.8" cy="6.5" rx="1.9" ry="2.4"/><ellipse cx="6.3" cy="2.6" rx="1.9" ry="2.4"/><ellipse cx="10.7" cy="2.6" rx="1.9" ry="2.4"/><ellipse cx="14.2" cy="6.5" rx="1.9" ry="2.4"/><path d="M8.5 7c-3 0-5.5 4-4.5 6.3 1 1.6 3 .6 4.5.6s3.5 1 4.5-.6C14 11 11.5 7 8.5 7z"/></svg><span class="t">LogicalStep [1427774842]</span></div>
<div class="r"><svg class="e" width="16" height="10" viewBox="0 0 16 10"><path d="M0 5C3 0 13 0 16 5 13 10 3 10 0 5z" fill="#98d494"/><circle cx="8" cy="5" r="2.6" fill="#fff"/><circle cx="8" cy="5" r="1.5" fill="#7cc478"/></svg><span class="c">MSE_edge1_4_isExecuting</span><span class="d">Agent-&gt;edge1.isExecuting()</span></div>
<div class="r"><svg class="e" width="16" height="10" viewBox="0 0 16 10"><path d="M0 5C3 0 13 0 16 5 13 10 3 10 0 5z" fill="#98d494"/><circle cx="8" cy="5" r="2.6" fill="#fff"/><circle cx="8" cy="5" r="1.5" fill="#7cc478"/></svg><span class="c">MSE_s1ToE1_23_pop</span><span class="d">Place-&gt;s1ToE1.pop()</span></div>
<div class="r"><svg class="e" width="16" height="10" viewBox="0 0 16 10"><path d="M0 5C3 0 13 0 16 5 13 10 3 10 0 5z" fill="#98d494"/><circle cx="8" cy="5" r="2.6" fill="#fff"/><circle cx="8" cy="5" r="1.5" fill="#7cc478"/></svg><span class="c">MSE_e1in1_12_read</span><span class="d">InputPort-&gt;e1in1.read()</span></div>
</div>
<div class="note" style="left:600px;top:998px;width:320px"><div class="j" style="width:318px">With strategies to focus only on edge1:</div><div>3 interleavings</div></div>
</body></html>
